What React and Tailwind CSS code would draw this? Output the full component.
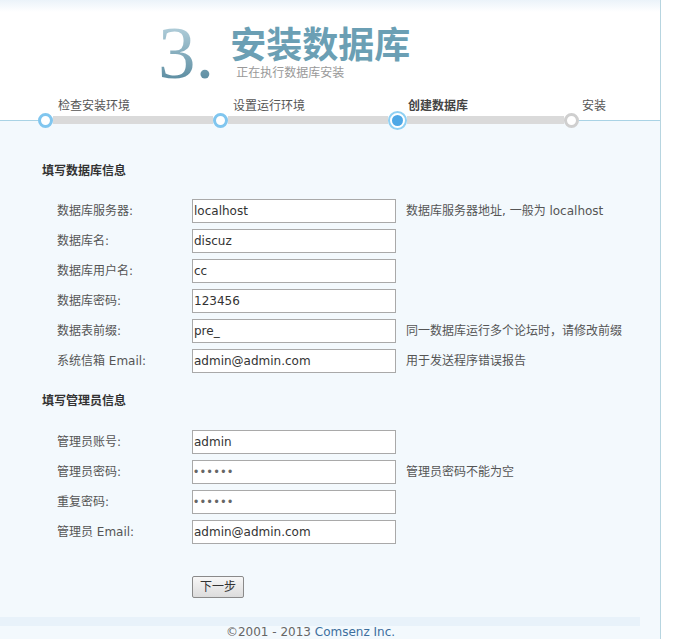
import React from "react";

const FONT = { fontFamily: '"DejaVu Sans", "Noto Sans CJK SC", sans-serif' };

function Row({ label, value, dots, hint }) {
  return (
    <div className="flex items-center h-[30px]">
      <div className="w-[150px] pl-[15px] text-[12px] text-[#555]">{label}</div>
      {dots ? (
        <input
          type="text"
          defaultValue="••••••"
          readOnly
          className="w-[204px] h-[24px] border border-[#a9a9a9] bg-white px-[1px] text-[12px] tracking-[2.6px] text-[#666] outline-none"
          style={{ fontFamily: '"Liberation Sans", sans-serif' }}
        />
      ) : (
        <input
          type="text"
          defaultValue={value}
          readOnly
          className="w-[204px] h-[24px] border border-[#a9a9a9] bg-white px-[1px] text-[12px] text-[#333] outline-none"
          style={FONT}
        />
      )}
      {hint && <div className="ml-[10px] text-[12px] text-[#555] whitespace-nowrap">{hint}</div>}
    </div>
  );
}

function Circle({ gray }) {
  return (
    <div
      className={
        "flex-none w-[15px] h-[15px] rounded-full border-[3px] bg-white relative z-10 " +
        (gray ? "border-[#cfcfcf]" : "border-[#80c6ef]")
      }
    />
  );
}

function ActiveCircle() {
  return (
    <div className="flex-none w-[19px] h-[19px] rounded-full border-2 border-[#8fd0f3] bg-white flex items-center justify-center relative z-10">
      <div className="w-[11px] h-[11px] rounded-full bg-[#4ea8e6]" />
    </div>
  );
}

export default function App() {
  return (
    <div className="w-[679px] h-[639px] bg-white overflow-hidden flex" style={FONT}>
      <div className="w-[661px] flex-none border-r border-[#b7d5e0] flex flex-col">
        {/* Header */}
        <div className="h-[112px] flex-none bg-[linear-gradient(to_bottom,#ebf3f9,#ffffff_12px)] flex flex-col">
          <div className="flex pl-[158px] pt-[15px] h-[90px]">
            <div
              className="text-[75px] leading-[75px] bg-[linear-gradient(to_bottom,#c3dce6,#4d8197)] bg-clip-text text-transparent"
              style={{ fontFamily: '"Liberation Serif", serif' }}
            >
              3.
            </div>
            <div className="ml-[16px] flex flex-col">
              <div
                className="mt-[11px] text-[36px] leading-[32px] font-bold text-[#6b9fb4]"
                style={{ fontFamily: '"Noto Sans CJK SC", sans-serif' }}
              >
                安装数据库
              </div>
              <div className="mt-[9px] pl-[6px] text-[12px] leading-[12px] text-[#999]">正在执行数据库安装</div>
            </div>
          </div>
          <div className="mt-[10px] flex pl-[58px] text-[12px] leading-[12px] text-[#555]">
            <div className="w-[175px]">检查安装环境</div>
            <div className="w-[175px]">设置运行环境</div>
            <div className="w-[174px] font-bold text-[#444]">创建数据库</div>
            <div>安装</div>
          </div>
        </div>

        {/* Steps */}
        <div className="h-[16px] flex-none flex items-center bg-[linear-gradient(to_bottom,#ffffff_8px,#f3f9fd_8px)]">
          <div className="w-[38px] h-px bg-[#a9d3e5] flex-none" />
          <Circle />
          <div className="w-[160px] h-[8px] bg-[#dadada] flex-none" />
          <Circle />
          <div className="w-[160px] h-[8px] bg-[#dadada] flex-none" />
          <ActiveCircle />
          <div className="w-[157px] h-[8px] bg-[#dadada] flex-none" />
          <Circle gray />
          <div className="flex-1 h-px bg-[#a9d3e5]" />
        </div>

        {/* Body */}
        <div className="flex-1 bg-[#f3f9fd] flex flex-col">
          <div className="pl-[42px] pt-[35px]">
            <div className="text-[12px] leading-[16px] font-bold text-[#333]">填写数据库信息</div>
            <div className="mt-[17px]">
              <Row label="数据库服务器:" value="localhost" hint="数据库服务器地址, 一般为 localhost" />
              <Row label="数据库名:" value="discuz" />
              <Row label="数据库用户名:" value="cc" />
              <Row label="数据库密码:" value="123456" />
              <Row label="数据表前缀:" value="pre_" hint="同一数据库运行多个论坛时，请修改前缀" />
              <Row label="系统信箱 Email:" value="admin@admin.com" hint="用于发送程序错误报告" />
            </div>
            <div className="mt-[17px] text-[12px] leading-[16px] font-bold text-[#333]">填写管理员信息</div>
            <div className="mt-[18px]">
              <Row label="管理员账号:" value="admin" />
              <Row label="管理员密码:" dots hint="管理员密码不能为空" />
              <Row label="重复密码:" dots />
              <Row label="管理员 Email:" value="admin@admin.com" />
            </div>
            <div className="mt-[27px] pl-[150px]">
              <button className="w-[52px] h-[22px] border border-[#8a8a8a] rounded-[2px] bg-[linear-gradient(to_bottom,#f7f7f7,#dcdcdc)] text-[12px] text-[#333]">
                下一步
              </button>
            </div>
          </div>
          <div className="mt-[19px] w-[640px] h-[9px] bg-[#e8f2fa] flex-none" />
          <div className="w-[621px] flex justify-center text-[12px] leading-[12px] flex-none">
            <span className="text-[#666]">©2001 - 2013&nbsp;</span>
            <span className="text-[#3d6f9e]">Comsenz Inc.</span>
          </div>
        </div>
      </div>
    </div>
  );
}
